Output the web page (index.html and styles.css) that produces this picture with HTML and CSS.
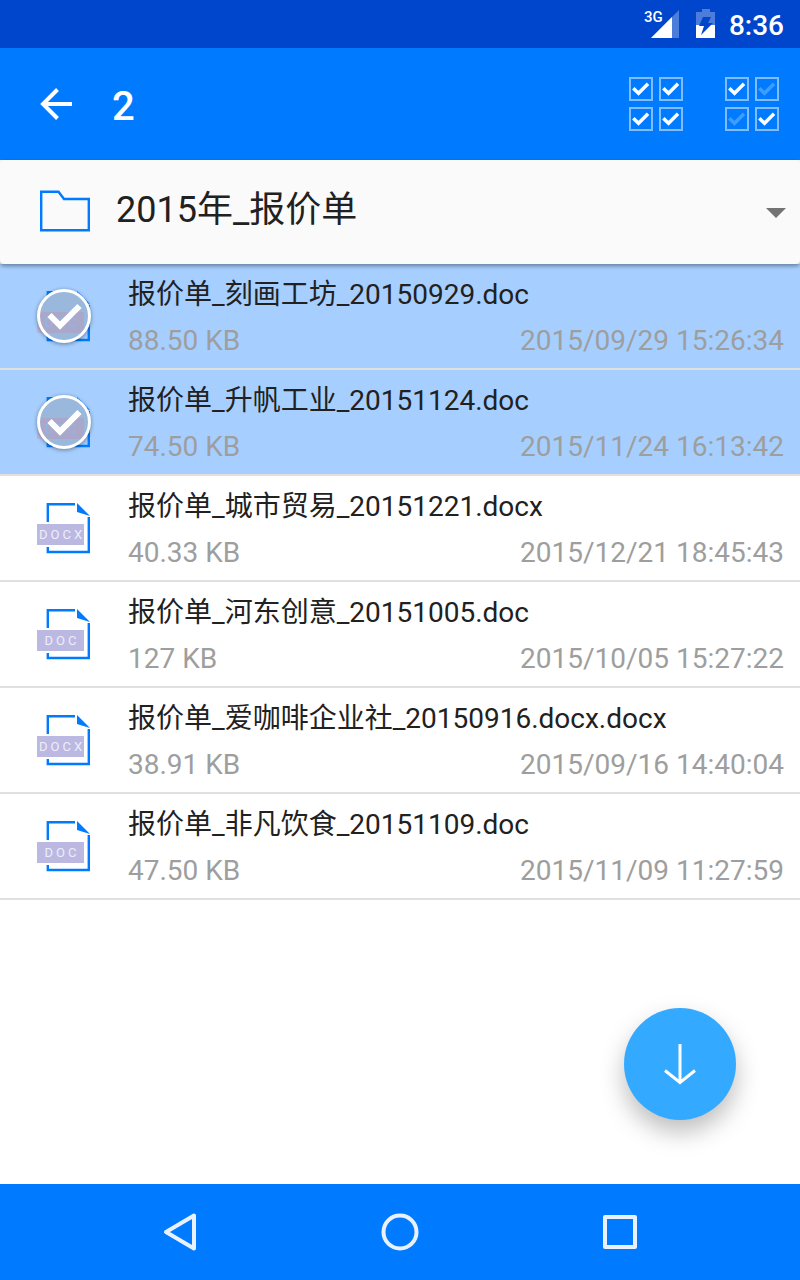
FILE: index.html
```html
<!DOCTYPE html>
<html lang="zh-CN">
<head>
<meta charset="utf-8">
<meta name="viewport" content="width=device-width, initial-scale=1">
<title>2015年_报价单</title>
<link rel="stylesheet" href="styles.css">
</head>
<body>
<svg class="defs" aria-hidden="true">
  <symbol id="box" viewBox="0 0 24 24"><rect x="1" y="1" width="22" height="22" fill="none" stroke="#fff" stroke-opacity=".5" stroke-width="2"/></symbol>
  <symbol id="tick" viewBox="0 0 24 24"><path d="M4.300 11.300l5.200 5 9.500-9.500" fill="none" stroke="#fff" stroke-width="3.500"/></symbol>
  <symbol id="page" viewBox="0 0 54 52">
    <path d="M10.800 19V1.200H38M10.800 44v5H51.800V14" fill="none" stroke="#007bff" stroke-width="2.400"/>
    <path d="M40 0v9l13 4z" fill="#007bff"/>
    <rect y="21" width="47" height="21" fill="#bbb9e2"/>
  </symbol>
  <symbol id="disc" viewBox="0 0 60 60">
    <circle cx="30" cy="30" r="26" fill="#9ab8dc"/>
    <path d="M5 26H50V45L48 47H12A25 25 0 0 1 5 26z" fill="#a9a8ca"/>
  </symbol>
  <symbol id="check" viewBox="0 0 60 60">
    <circle cx="30" cy="30" r="25.500" fill="none" stroke="#fff" stroke-width="3"/>
    <path d="M15.500 29l10.500 10.500 19.500-19.500" fill="none" stroke="#fff" stroke-width="6"/>
  </symbol>
</svg>
<div class="screen">
  <div class="status">
    <svg width="36" height="30" viewBox="0 0 36 30" role="img" aria-label="3G">
      <path d="M35 1v28H7z" fill="#fff" fill-opacity=".3"/>
      <path d="M28 8v21H7z" fill="#fff"/>
      <text class="cell-label" x="0" y="13">3G</text>
    </svg>
    <svg class="battery" width="20" height="30" viewBox="0 0 20 30" aria-hidden="true">
      <path d="M6 0h8v3h5v13H0V3h6z" fill="#fff" fill-opacity=".3"/>
      <path d="M0 16h19v13H0z" fill="#fff"/>
      <path d="M7 8h8l-3 6h5L5 26l3-9H3z" fill="#0046cc"/>
    </svg>
    <span class="clock">8:36</span>
  </div>

  <header class="toolbar">
    <button class="icon-button" aria-label="返回">
      <svg width="32" height="32" viewBox="0 0 32 32"><path d="M17.500 1.500L3 16l14.500 14.500M3 16h29" fill="none" stroke="#fff" stroke-width="4"/></svg>
    </button>
    <h1 class="count">2</h1>
    <div class="actions">
      <button class="icon-button" aria-label="全选">
        <svg width="54" height="54" viewBox="0 0 54 54">
          <use href="#box" width="24" height="24"/><use href="#box" x="30" width="24" height="24"/>
          <use href="#box" y="30" width="24" height="24"/><use href="#box" x="30" y="30" width="24" height="24"/>
          <use href="#tick" width="24" height="24"/><use href="#tick" x="30" width="24" height="24"/>
          <use href="#tick" y="30" width="24" height="24"/><use href="#tick" x="30" y="30" width="24" height="24"/>
        </svg>
      </button>
      <button class="icon-button" aria-label="反选">
        <svg width="54" height="54" viewBox="0 0 54 54">
          <use href="#box" width="24" height="24"/><use href="#box" x="30" width="24" height="24"/>
          <use href="#box" y="30" width="24" height="24"/><use href="#box" x="30" y="30" width="24" height="24"/>
          <use href="#tick" width="24" height="24"/><use href="#tick" x="30" width="24" height="24" opacity=".25"/>
          <use href="#tick" y="30" width="24" height="24" opacity=".25"/><use href="#tick" x="30" y="30" width="24" height="24"/>
        </svg>
      </button>
    </div>
  </header>

  <div class="folder-wrap">
    <div class="folder">
      <svg width="50" height="44" viewBox="0 0 50 44" aria-hidden="true"><path d="M1.200 1.700H18.500L24 9H48.800V40.200H1.200z" fill="none" stroke="#007bff" stroke-width="2.400"/></svg>
      <select class="folder-select" aria-label="文件夹"><option>2015年_报价单</option></select>
      <svg class="caret" width="20" height="10" viewBox="0 0 20 10" aria-hidden="true"><path d="M0 0h20L10 10z" fill="#737373"/></svg>
    </div>
  </div>

  <main class="content">
    <ul class="files">
      <li class="file selected">
        <div class="thumb"><svg class="doc" viewBox="0 0 54 52" aria-hidden="true"><use href="#page"/></svg><svg class="badge" viewBox="0 0 60 60" role="img" aria-label="DOC 已选"><use href="#disc"/><text class="doc-label" x="28" y="41">DOC</text><use href="#check"/></svg></div>
        <div class="info"><span class="name">报价单_刻画工坊_20150929.doc</span><div class="meta"><span>88.50 KB</span><time>2015/09/29 15:26:34</time></div></div>
      </li>
      <li class="file selected">
        <div class="thumb"><svg class="doc" viewBox="0 0 54 52" aria-hidden="true"><use href="#page"/></svg><svg class="badge" viewBox="0 0 60 60" role="img" aria-label="DOC 已选"><use href="#disc"/><text class="doc-label" x="28" y="41">DOC</text><use href="#check"/></svg></div>
        <div class="info"><span class="name">报价单_升帆工业_20151124.doc</span><div class="meta"><span>74.50 KB</span><time>2015/11/24 16:13:42</time></div></div>
      </li>
      <li class="file">
        <div class="thumb"><svg class="doc" viewBox="0 0 54 52" aria-hidden="true"><use href="#page"/><text class="doc-label" x="25" y="36">DOCX</text></svg></div>
        <div class="info"><span class="name">报价单_城市贸易_20151221.docx</span><div class="meta"><span>40.33 KB</span><time>2015/12/21 18:45:43</time></div></div>
      </li>
      <li class="file">
        <div class="thumb"><svg class="doc" viewBox="0 0 54 52" aria-hidden="true"><use href="#page"/><text class="doc-label" x="25" y="36">DOC</text></svg></div>
        <div class="info"><span class="name">报价单_河东创意_20151005.doc</span><div class="meta"><span>127 KB</span><time>2015/10/05 15:27:22</time></div></div>
      </li>
      <li class="file">
        <div class="thumb"><svg class="doc" viewBox="0 0 54 52" aria-hidden="true"><use href="#page"/><text class="doc-label" x="25" y="36">DOCX</text></svg></div>
        <div class="info"><span class="name">报价单_爱咖啡企业社_20150916.docx.docx</span><div class="meta"><span>38.91 KB</span><time>2015/09/16 14:40:04</time></div></div>
      </li>
      <li class="file">
        <div class="thumb"><svg class="doc" viewBox="0 0 54 52" aria-hidden="true"><use href="#page"/><text class="doc-label" x="25" y="36">DOC</text></svg></div>
        <div class="info"><span class="name">报价单_非凡饮食_20151109.doc</span><div class="meta"><span>47.50 KB</span><time>2015/11/09 11:27:59</time></div></div>
      </li>
    </ul>
    <button class="fab" aria-label="下载">
      <svg width="32" height="42" viewBox="0 0 32 42"><path d="M16 1v38.500M1 27.500l15 12 15-12" fill="none" stroke="#fff" stroke-width="3"/></svg>
    </button>
  </main>

  <nav class="navbar">
    <button class="icon-button" aria-label="后退"><svg width="40" height="40" viewBox="0 0 40 40"><path d="M34 3.500v33L6 20z" fill="none" stroke="#e9f1fc" stroke-width="4" stroke-linejoin="round"/></svg></button>
    <button class="icon-button" aria-label="主页"><svg width="40" height="40" viewBox="0 0 40 40"><circle cx="20" cy="20" r="16.500" fill="none" stroke="#e9f1fc" stroke-width="4"/></svg></button>
    <button class="icon-button" aria-label="最近任务"><svg width="40" height="40" viewBox="0 0 40 40"><rect x="5" y="5" width="30" height="30" fill="none" stroke="#e9f1fc" stroke-width="4" stroke-linejoin="round"/></svg></button>
  </nav>
</div>
</body>
</html>
```
FILE: styles.css
```css
* { box-sizing: border-box; }
body {
  margin: 0;
  background: #fff;
  color: #212121;
  font-family: Roboto, "Noto Sans CJK SC", sans-serif;
  font-size: 28px;
}
.defs { position: absolute; width: 0; height: 0; }
svg { display: block; flex: none; }
.screen { display: flex; flex-direction: column; min-height: 100vh; }
.status {
  display: flex;
  align-items: center;
  justify-content: flex-end;
  height: 48px;
  padding-right: 16px;
  background: #0046cc;
  color: #fff;
}
.battery { margin: 0 13px 0 16px; }
.clock { font-weight: 500; line-height: 48px; padding-top: 4px; }
.cell-label { font-size: 15px; font-weight: 500; fill: #fff; }

.icon-button { display: block; border: 0; padding: 0; background: none; }
.toolbar {
  display: flex;
  align-items: center;
  height: 112px;
  padding: 0 21px 0 40px;
  background: #007bff;
  color: #fff;
}
.count { margin: 6px 0 0 40px; font-size: 40px; font-weight: 500; line-height: 48px; }
.actions { display: flex; gap: 42px; margin-left: auto; }

.folder-wrap { position: relative; z-index: 1; }
.folder {
  display: flex;
  align-items: center;
  height: 104px;
  padding: 0 14px 0 40px;
  border-radius: 4px;
  background: #fafafa;
  box-shadow: 0 2px 4px rgba(0, 0, 0, .4);
}
.folder-select {
  flex: 1;
  min-width: 0;
  height: 56px;
  margin: 0 12px 4px 26px;
  padding: 0;
  border: 0;
  appearance: none;
  background: none;
  color: inherit;
  font-family: inherit;
  font-size: 36px;
}
.caret { margin-top: 2px; }

.content { position: relative; flex: 1; }
.files { margin: 0; padding: 0; list-style: none; }
.file {
  display: flex;
  align-items: center;
  height: 106px;
  padding: 0 16px 0 37px;
  border-bottom: 2px solid #e0e0e0;
}
.selected { background: #a6cfff; }
.thumb { position: relative; width: 54px; margin-right: 37px; }
.doc { width: 54px; height: 52px; margin-top: 2px; }
.doc-label {
  fill: #eeedf8;
  font-size: 13px;
  letter-spacing: 3px;
  text-anchor: middle;
}
.selected .doc-label { fill: #94b6e0; }
.badge {
  position: absolute;
  top: -3px;
  left: -3px;
  width: 60px;
  height: 60px;
  filter: drop-shadow(0 1px 2px rgba(0, 0, 0, .4));
}
.info { flex: 1; min-width: 0; padding-top: 4px; }
.name { display: block; line-height: 46px; white-space: nowrap; }
.meta { display: flex; justify-content: space-between; color: #9e9e9e; line-height: 46px; }

.fab {
  position: absolute;
  right: 64px;
  bottom: 64px;
  display: grid;
  place-items: center;
  width: 112px;
  height: 112px;
  padding: 0;
  border: 0;
  border-radius: 50%;
  background: #33aaff;
  box-shadow: 0 12px 24px rgba(0, 0, 0, .26);
}
.navbar {
  display: flex;
  align-items: center;
  justify-content: center;
  gap: 180px;
  height: 96px;
  background: #007bff;
}
```
